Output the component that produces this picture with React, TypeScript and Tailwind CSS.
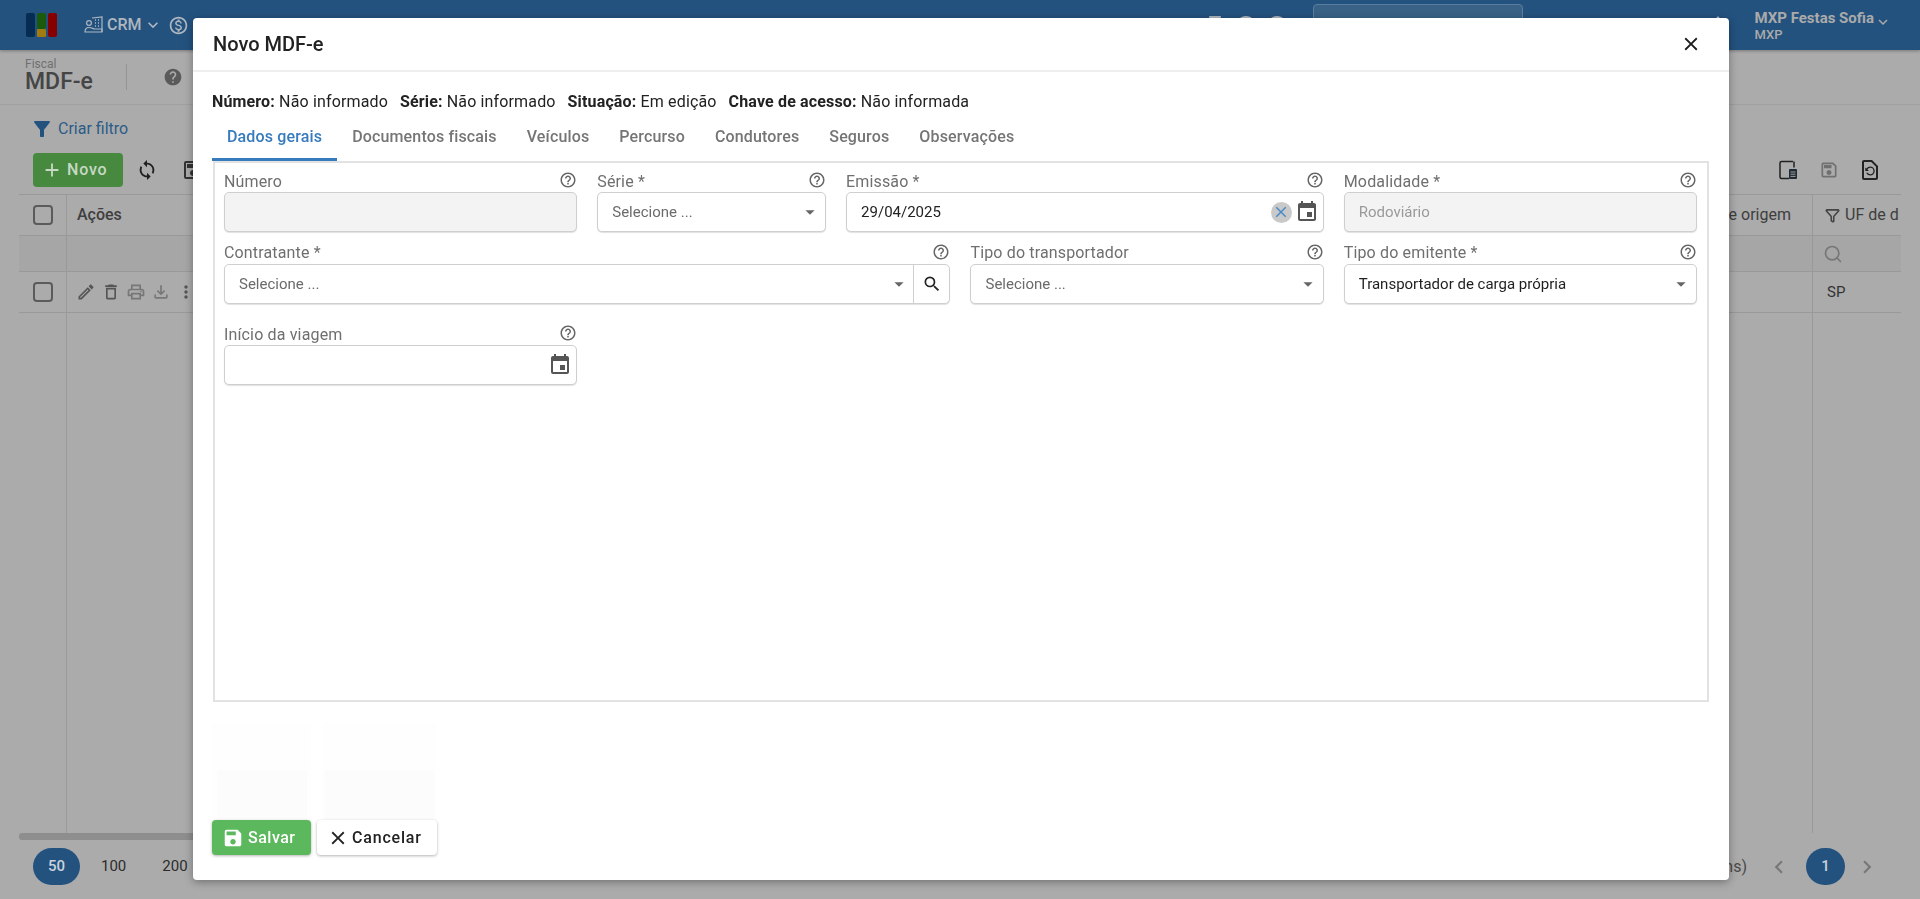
import React from "react";
import {
  MdAdd, MdSync, MdOutlineEdit, MdDeleteOutline, MdOutlinePrint, MdOutlineFileDownload, MdMoreVert, MdHelp, MdFilterAlt,
  MdKeyboardArrowDown, MdClose, MdHelpOutline, MdEvent, MdArrowDropDown, MdSearch, MdSave, MdChevronLeft, MdChevronRight,
  MdOutlineSave, MdOutlineRestorePage, MdOutlineMonetizationOn, MdNotifications, MdOutlineInfo, MdOutlineHelpOutline, MdPushPin,
} from "react-icons/md";
import { Filter, Search } from "lucide-react";

function Logo() {
  return (
    <svg width="31" height="24" viewBox="0 0 31 24" className="shrink-0">
      <rect x="0" y="0" width="9" height="24" rx="2" fill="#062c54" />
      <rect x="11" y="0" width="9" height="16" rx="2" fill="#1b5a0c" />
      <rect x="11" y="16" width="9" height="8" rx="1" fill="#a17b10" />
      <rect x="22" y="0" width="9" height="24" rx="2" fill="#870000" />
    </svg>
  );
}

function CrmIcon() {
  return (
    <svg width="20" height="18" viewBox="0 0 20 18" fill="none" stroke="#aeb6bf" strokeWidth="1.2" className="shrink-0">
      <path d="M8 2 18 1v15" />
      <path d="M11 4h1M14 4h1M11 7h1M14 7h1M11 10h1M14 10h1" strokeWidth="1.6" />
      <circle cx="5" cy="7" r="2.4" />
      <path d="M1 16c0-3 2-4.500 4-4.500 3 0 4 1.500 6 1.500h7v3z" />
    </svg>
  );
}

function DeviceDocIcon() {
  return (
    <svg width="24" height="24" viewBox="0 0 24 24" fill="none" className="shrink-0">
      <path d="M17 3.500H5.500a1.500 1.500 0 0 0-1.500 1.500v14a1.500 1.500 0 0 0 1.500 1.500H13" stroke="#222" strokeWidth="1.500" />
      <path d="M18 3.500v6" stroke="#222" strokeWidth="1.500" />
      <rect x="13" y="11" width="8" height="10" rx="1" fill="#1f2a36" />
      <path d="M14.500 14h5M14.500 16.200h5M14.500 18.400h5" stroke="#a9a9a9" strokeWidth="0.9" />
    </svg>
  );
}

function Field({ span, label, low, children }: { span: string; label: string; low?: boolean; children: React.ReactNode }) {
  return (
    <div className={span}>
      <div className="flex h-[16px] items-center justify-between text-[16px] leading-[16px] text-[#6f6f6f]">
        <span className={`tracking-[0.15px] ${low ? "pt-[2px]" : ""}`}>{label}</span>
        <MdHelpOutline className="mb-[2px] text-[18px] text-[#666]" />
      </div>
      {children}
    </div>
  );
}

function Box({ disabled, children, className = "" }: { disabled?: boolean; children?: React.ReactNode; className?: string }) {
  return (
    <div
      className={`mt-[3px] flex h-[40px] items-center rounded-[5px] border border-[#cfcfcf] pl-[14px] text-[15px] shadow-[0_1px_1px_rgba(0,0,0,0.12)] ${
        disabled ? "bg-[#f3f3f3]" : "bg-white"
      } ${className}`}
    >
      {children}
    </div>
  );
}

function SelectBox({ text, dark }: { text: string; dark?: boolean }) {
  return (
    <Box>
      <span className={`flex-1 ${dark ? "text-[#1f1f1f]" : "text-[#6b6b6b]"}`}>{text}</span>
      <MdArrowDropDown className="mr-[4px] text-[22px] text-[#666]" />
    </Box>
  );
}

const tabs = ["Dados gerais", "Documentos fiscais", "Veículos", "Percurso", "Condutores", "Seguros", "Observações"];

function Background() {
  return (
    <div className="flex h-[899px] w-[1920px] flex-col overflow-hidden bg-[#ababab] font-['Roboto',sans-serif]">
      <header className="flex h-[50px] shrink-0 items-center bg-[#23527f] pl-[26px] shadow-[0_1px_3px_rgba(0,0,0,0.3)]">
        <Logo />
        <div className="ml-[27px] flex items-center text-[16px] font-medium text-[#aeb6bf]">
          <CrmIcon />
          <span className="ml-[3px]">CRM</span>
          <MdKeyboardArrowDown className="ml-[1px] text-[20px]" />
        </div>
        <MdOutlineMonetizationOn className="ml-[5px] text-[21px] text-[#aeb6bf]" />
        <div className="ml-auto flex h-[50px] items-start pr-[28px] text-[#aeb6bf]">
          <div className="mt-[14px] flex gap-[7px] text-[24px]">
            <MdPushPin />
            <MdOutlineInfo />
            <MdOutlineHelpOutline />
          </div>
          <div className="ml-[24px] mt-[4px] h-[40px] w-[210px] rounded-[4px] border border-[#5a7e9f] bg-[#3a6286]" />
          <MdNotifications className="ml-[183px] mt-[14px] text-[24px]" />
          <div className="ml-[25px] flex flex-col pt-[8px] text-[#aaaaaa]">
            <div className="flex h-[20px] items-center whitespace-nowrap text-[15px] font-bold leading-[20px]">
              MXP Festas Sofia
              <MdKeyboardArrowDown className="mt-[8px] text-[18px]" />
            </div>
            <span className="text-[13px] font-medium leading-[14px]">MXP</span>
          </div>
        </div>
      </header>

      <div className="flex h-[55px] shrink-0 items-center border-b border-[#a0a0a0] pl-[25px]">
        <div className="flex flex-col">
          <span className="-mt-[2px] text-[12px] leading-[12px] text-[#707070]">Fiscal</span>
          <span className="text-[23px] font-medium leading-[24px] text-[#454545]">MDF-e</span>
        </div>
        <div className="ml-[33px] h-[26px] w-px bg-[#939393]" />
        <MdHelp className="ml-[36px] text-[20px] text-[#5a5a5a]" />
      </div>

      <div className="flex flex-1 flex-col px-[19px]">
        <div className="mt-[13px] flex h-[22px] items-center pl-[11px] text-[16px] text-[#2c5c87]">
          <MdFilterAlt className="text-[24px] text-[#23527f]" />
          <span className="ml-[4px]">Criar filtro</span>
        </div>
        <div className="mt-[13px] flex h-[34px] items-center pl-[14px] pr-[19px]">
          <div className="flex h-[34px] w-[90px] items-center gap-[4px] rounded-[4px] bg-[#46893f] pl-[8px] text-[16px] font-medium tracking-[0.8px] text-[#c7d9c4]">
            <MdAdd className="text-[22px]" />
            Novo
          </div>
          <MdSync className="ml-[13px] text-[22px] text-[#1f1f1f]" />
          <MdOutlineSave className="ml-[23px] text-[24px] text-[#333]" />
          <div className="ml-auto flex items-center">
            <DeviceDocIcon />
            <MdOutlineSave className="ml-[19px] text-[20px] text-[#707070]" />
            <MdOutlineRestorePage className="ml-[19px] text-[24px] text-[#222]" />
          </div>
        </div>

        <div className="mt-[7px] flex flex-1 flex-col">
          <div className="flex h-[42px] border-y border-[#999] text-[16px] text-[#3e3e3e]">
            <div className="flex w-[48px] items-center justify-center border-r border-[#999]">
              <span className="h-[20px] w-[20px] rounded-[4px] border-2 border-[#5b5b5b]" />
            </div>
            <div className="flex flex-1 items-center pl-[10px] font-medium">Ações</div>
            <div className="flex w-[110px] items-center justify-end pr-[21px]">e origem</div>
            <div className="flex w-[89px] items-center overflow-hidden whitespace-nowrap border-l border-[#999] pl-[12px]">
              <Filter size={15} strokeWidth={2.5} className="mr-[5px] shrink-0 text-[#444]" />
              UF de d
            </div>
          </div>
          <div className="flex h-[36px] border-b border-[#999] bg-[#a6a6a6]">
            <div className="w-[48px] border-r border-[#999]" />
            <div className="flex-1" />
            <div className="flex w-[89px] items-center border-l border-[#999] pl-[10px] text-[#777]">
              <Search size={20} />
            </div>
          </div>
          <div className="flex h-[41px] border-b border-[#999] text-[15px] text-[#333]">
            <div className="flex w-[48px] items-center justify-center border-r border-[#999]">
              <span className="h-[20px] w-[20px] rounded-[4px] border-2 border-[#5b5b5b]" />
            </div>
            <div className="flex flex-1 items-center gap-[5px] pl-[9px] text-[20px] text-[#555]">
              <MdOutlineEdit />
              <MdDeleteOutline />
              <MdOutlinePrint className="text-[#777]" />
              <MdOutlineFileDownload className="text-[#777]" />
              <MdMoreVert />
            </div>
            <div className="flex w-[89px] items-center border-l border-[#999] pl-[14px]">SP</div>
          </div>
          <div className="flex flex-1">
            <div className="w-[48px] border-r border-[#999]" />
            <div className="flex-1" />
            <div className="w-[89px] border-l border-[#999]" />
          </div>
          <div className="mr-[300px] h-[7px] rounded-[3px] bg-[#8e8e8e]" />
        </div>

        <div className="mb-[14px] mt-[8px] flex h-[37px] items-center pl-[14px] text-[15px] text-[#2b2b2b]">
          <span className="flex h-[37px] w-[47px] items-center justify-center rounded-full bg-[#23527f] font-medium text-[#c9d3dd]">50</span>
          <span className="ml-[21px]">100</span>
          <span className="ml-[36px]">200</span>
          <span className="ml-auto text-[16px] text-[#4a4a4a]">ns)</span>
          <MdChevronLeft className="ml-[19px] text-[26px] text-[#777]" />
          <span className="ml-[14px] flex h-[37px] w-[39px] items-center justify-center rounded-full bg-[#23527f] font-medium text-[#c9d3dd]">1</span>
          <MdChevronRight className="ml-[9px] mr-[21px] text-[26px] text-[#777]" />
        </div>
      </div>
    </div>
  );
}

function GhostBlock({ outer, inner }: { outer: string; inner: string }) {
  return (
    <div className={`flex h-[97px] flex-col items-center bg-[#fefefe] ${outer}`}>
      <div className={`mt-[47px] h-[50px] bg-[#fcfcfc] ${inner}`} />
    </div>
  );
}

function Dialog() {
  return (
    <div className="fixed left-[193px] top-[18px] flex h-[862px] w-[1536px] flex-col rounded-[4px] bg-white font-['Roboto',sans-serif] shadow-[0_2px_8px_rgba(0,0,0,0.35)]">
      <div className="flex h-[54px] shrink-0 items-center justify-between border-b-2 border-[#eeeeee] pl-[20px] pr-[27px]">
        <span className="text-[20px] font-medium text-[#222]">Novo MDF-e</span>
        <MdClose className="text-[22px] text-[#1c1c1c]" />
      </div>

      <div className="flex flex-1 flex-col px-[19px]">
        <div className="mt-[20px] flex gap-[12px] text-[16px] leading-[20px] tracking-[0.15px] text-[#222]">
          <span><b className="font-bold">Número:</b> Não informado</span>
          <span><b className="font-bold">Série:</b> Não informado</span>
          <span><b className="font-bold">Situação:</b> Em edição</span>
          <span><b className="font-bold">Chave de acesso:</b> Não informada</span>
        </div>

        <div className="mt-[13px] flex h-[36px] text-[16px] font-medium tracking-[0.15px] text-[#757575]">
          {tabs.map((t, i) => (
            <div
              key={t}
              className={`flex items-start px-[15px] ${i === 0 ? "border-b-[3px] border-[#357bbd] text-[#357bbd]" : ""}`}
            >
              {t}
            </div>
          ))}
        </div>

        <div className="mx-[1px] h-[541px] border-2 border-[#e2e2e2] pl-[9px] pr-[10px] pt-[10px]">
          <div className="grid grid-cols-12 gap-x-[20px] gap-y-[13px]">
            <Field span="col-span-3" label="Número" low><Box disabled /></Field>
            <Field span="col-span-2" label="Série *" low><SelectBox text="Selecione ..." /></Field>
            <Field span="col-span-4" label="Emissão *" low>
              <Box className="pr-[4px] text-[#222]">
                <span className="flex-1">29/04/2025</span>
                <span className="flex h-[21px] w-[21px] items-center justify-center rounded-full bg-[#c9c9c9]">
                  <MdClose className="text-[18px] text-[#4a8bc7]" />
                </span>
                <MdEvent className="ml-[3px] text-[24px] text-[#555]" />
              </Box>
            </Field>
            <Field span="col-span-3" label="Modalidade *" low>
              <Box disabled><span className="text-[#9a9a9a]">Rodoviário</span></Box>
            </Field>

            <Field span="col-span-6" label="Contratante *">
              <Box className="pr-0">
                <span className="flex-1 text-[#6b6b6b]">Selecione ...</span>
                <MdArrowDropDown className="mr-[3px] text-[22px] text-[#666]" />
                <span className="flex h-full w-[36px] items-center justify-center border-l border-[#cfcfcf]">
                  <MdSearch className="text-[20px] text-[#222]" />
                </span>
              </Box>
            </Field>
            <Field span="col-span-3" label="Tipo do transportador"><SelectBox text="Selecione ..." /></Field>
            <Field span="col-span-3" label="Tipo do emitente *"><SelectBox text="Transportador de carga própria" dark /></Field>

            <Field span="col-span-3 mt-[9px]" label="Início da viagem" low>
              <Box className="pr-[4px]">
                <span className="flex-1" />
                <MdEvent className="text-[24px] text-[#555]" />
              </Box>
            </Field>
          </div>
        </div>

        <div className="mt-[21px] flex gap-[11px]">
          <GhostBlock outer="w-[99px]" inner="w-[90px]" />
          <GhostBlock outer="w-[114px]" inner="w-[109px]" />
        </div>

        <div className="flex gap-[6px]">
          <div className="flex h-[35px] w-[99px] items-center gap-[4px] rounded-[4px] bg-[#5cb85c] pl-[10px] text-[16px] font-medium tracking-[0.5px] text-white shadow-[0_1px_3px_rgba(0,0,0,0.3)]">
            <MdSave className="text-[22px]" />
            Salvar
          </div>
          <div className="flex h-[35px] w-[120px] items-center gap-[3px] rounded-[4px] bg-white pl-[10px] text-[16px] font-medium tracking-[0.8px] text-[#222] shadow-[0_1px_3px_rgba(0,0,0,0.3)]">
            <MdClose className="text-[22px]" />
            Cancelar
          </div>
        </div>
      </div>
    </div>
  );
}

export default function App() {
  return (
    <div className="relative h-[899px] w-[1920px] overflow-hidden">
      <Background />
      <Dialog />
    </div>
  );
}
